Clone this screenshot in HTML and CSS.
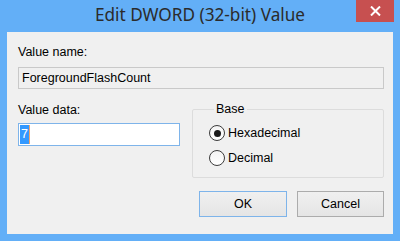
FILE: index.html
```html
<!DOCTYPE html>
<html lang="en">
<head>
    <meta charset="UTF-8">
    <title>Edit DWORD (32-bit) Value</title>
    <link rel="stylesheet" href="styles.css">
</head>
<body>
    <div class="window">
        <div class="titlebar">
            <span class="title">Edit DWORD (32-bit) Value</span>
            <button class="close-btn" aria-label="Close">
                <svg width="11" height="10" viewBox="0 0 11 10">
                    <path d="M1 0.5 L10 9.5 M10 0.5 L1 9.5" stroke="#fff" stroke-width="2" fill="none"/>
                </svg>
            </button>
        </div>
        <div class="client">
            <div class="label">Value name:</div>
            <div class="field readonly">ForegroundFlashCount</div>

            <div class="middle">
                <div class="data-col">
                    <div class="label">Value data:</div>
                    <div class="field editable"><span class="sel">7</span></div>
                </div>
                <fieldset class="base-group">
                    <legend>Base</legend>
                    <div class="radio-row">
                        <span class="radio checked"></span>
                        <span>Hexadecimal</span>
                    </div>
                    <div class="radio-row">
                        <span class="radio"></span>
                        <span>Decimal</span>
                    </div>
                </fieldset>
            </div>

            <div class="buttons">
                <button class="btn default">OK</button>
                <button class="btn">Cancel</button>
            </div>
        </div>
    </div>
</body>
</html>
```

FILE: styles.css
```css
body {
    margin: 0;
    font-family: "Liberation Sans", Arial, sans-serif;
    font-size: 12.5px;
    color: #000;
}
.window {
    width: 400px;
    height: 241px;
    background-color: #63aff7;
    display: flex;
    flex-direction: column;
    box-sizing: border-box;
}
.titlebar {
    position: relative;
    height: 32px;
    text-align: center;
}
.title {
    font-family: "Noto Sans", "Open Sans", sans-serif;
    font-size: 17.2px;
    line-height: 29px;
    color: #2b2b2b;
}
.close-btn {
    position: absolute;
    top: 0;
    right: 6px;
    width: 38px;
    height: 22px;
    border: none;
    padding: 0;
    background-color: #c75050;
    display: flex;
    align-items: center;
    justify-content: center;
}
.client {
    flex: 1;
    margin: 0 7px 7px 7px;
    background-color: #f0f0f0;
    padding: 13px 9px 0 11px;
}
.label {
    line-height: 15px;
    height: 15px;
    margin-bottom: 7px;
}
.field {
    box-sizing: border-box;
    height: 22px;
    line-height: 20px;
    padding: 0 3px;
    border: 1px solid #c9c9c9;
}
.readonly {
    background-color: #f0f0f0;
    margin-bottom: 13px;
}
.editable {
    width: 162px;
    height: 23px;
    border-color: #7eb4ea;
    background-color: #fff;
    padding: 1px 1px;
}
.sel {
    display: inline-block;
    height: 19px;
    line-height: 19px;
    padding: 0 1px 0 1px;
    background-color: #3399ff;
    color: #fff;
    border-right: 1px solid #f3a56a;
    vertical-align: top;
}
.middle {
    display: flex;
    gap: 12px;
}
.data-col {
    width: 162px;
    padding-top: 1px;
}
.data-col .label {
    margin-bottom: 5px;
}
.base-group {
    flex: 1;
    margin: 0;
    padding: 7px 0 10px 16px;
    border: 1px solid #dcdcdc;
    border-radius: 2px;
    min-width: 0;
}
.base-group legend {
    padding: 0 2px;
    margin-left: 5px;
    line-height: 15px;
}
.radio-row {
    display: flex;
    align-items: center;
    gap: 3px;
    height: 18px;
}
.radio-row + .radio-row {
    margin-top: 7px;
}
.radio {
    box-sizing: border-box;
    width: 16px;
    height: 16px;
    border: 1px solid #3c3c3c;
    border-radius: 50%;
    background: linear-gradient(#f4f4f4, #fff);
    display: flex;
    align-items: center;
    justify-content: center;
}
.radio.checked::after {
    content: "";
    width: 7px;
    height: 7px;
    border-radius: 50%;
    background-color: #1a1a1a;
}
.buttons {
    display: flex;
    justify-content: flex-end;
    gap: 10px;
    margin-top: 13px;
}
.btn {
    box-sizing: border-box;
    width: 87px;
    height: 26px;
    font-family: inherit;
    font-size: 12.5px;
    color: #000;
    border: 1px solid #acacac;
    background: linear-gradient(#f0f0f0, #e5e5e5);
    padding: 0;
}
.btn.default {
    width: 88px;
    border-color: #7eb4ea;
}
```
